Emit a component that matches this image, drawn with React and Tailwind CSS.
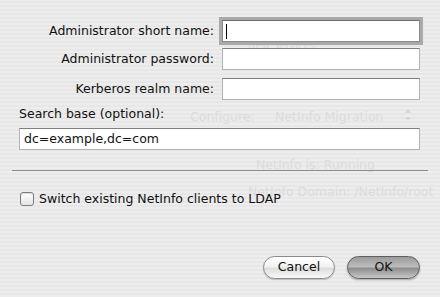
export default function App() {
  const font = { fontFamily: '"DejaVu Sans", "Liberation Sans", sans-serif' }

  return (
    <div
      style={font}
      className="relative w-[440px] h-[297px] overflow-hidden text-[12.5px] text-[#111] bg-[repeating-linear-gradient(0deg,#ededed_0px,#ededed_2px,#e7e7e7_2px,#e7e7e7_4px)]"
    >
      {/* ghost window behind the sheet */}
      <div className="absolute inset-0 pointer-events-none text-[#dcdcdc] text-[12.5px]">
        <span className="absolute left-[248px] top-[38px] text-[10px]">New Services</span>
        <span className="absolute left-[190px] top-[108px]">Configure:</span>
        <span className="absolute left-[275px] top-[108px]">NetInfo Migration</span>
        <svg className="absolute left-[404px] top-[107px]" width="8" height="16" viewBox="0 0 8 16">
          <path d="M1 6 L4 2 L7 6 Z M1 10 L4 14 L7 10 Z" fill="#d8d8d8" />
        </svg>
        <span className="absolute left-[256px] top-[156px]">NetInfo is:  Running</span>
        <span className="absolute left-[248px] top-[183px]">NetInfo Domain:  /NetInfo/root</span>
      </div>

      <div className="relative flex flex-col pt-[20px] px-[19px]">
        {/* Admin fields */}
        <div className="flex items-center">
          <label className="w-[195px] text-right">Administrator short name:</label>
          <div className="ml-[8px] w-[198px] h-[22px] bg-white border border-[#8a8a8a] border-t-[#6e6e6e] ring-[3px] ring-[#a9a9a9] flex items-center pl-[3px]">
            <span className="w-px h-[15px] bg-black" />
          </div>
        </div>
        <div className="flex items-center mt-[6px]">
          <label className="w-[195px] text-right">Administrator password:</label>
          <div className="ml-[8px] w-[198px] h-[22px] bg-white border border-[#b3b3b3] border-t-[#7f7f7f]" />
        </div>
        <div className="flex items-center mt-[8px]">
          <label className="w-[195px] text-right">Kerberos realm name:</label>
          <div className="ml-[8px] w-[198px] h-[22px] bg-white border border-[#b3b3b3] border-t-[#7f7f7f]" />
        </div>

        {/* Search base */}
        <div className="mt-[6px] h-[16px] flex items-center">Search base (optional):</div>
        <div className="mt-[6px] w-[401px] h-[22px] bg-white border border-[#b3b3b3] border-t-[#7f7f7f] flex items-center pl-[4px]">
          dc=example,dc=com
        </div>

        {/* Separator */}
        <div className="-mx-[7px] mt-[20px] h-px bg-[#8c8c8c]" />

        {/* Checkbox */}
        <div className="mt-[21px] h-[14px] flex items-center gap-[5px] pl-px">
          <span className="w-[14px] h-[14px] rounded-[3px] border border-[#7d7d7d] bg-[linear-gradient(#ffffff,#e4e4e4)] shadow-[inset_0_1px_1px_rgba(0,0,0,0.15)]" />
          <span>Switch existing NetInfo clients to LDAP</span>
        </div>

        {/* Buttons */}
        <div className="mt-[50px] flex justify-end gap-[12px] pr-[1px]">
          <button className="w-[72px] h-[23px] rounded-full border border-[#8a8a8a] bg-[linear-gradient(#ffffff,#f2f2f2_45%,#dedede_55%,#f8f8f8)] shadow-[0_1px_1px_rgba(0,0,0,0.2)] text-[12.5px] text-[#111]">
            Cancel
          </button>
          <button className="w-[73px] h-[23px] rounded-full border border-[#5e5e5e] bg-[linear-gradient(#9a9a9a,#bcbcbc_45%,#8e8e8e_55%,#c8c8c8)] shadow-[0_1px_2px_rgba(0,0,0,0.3)] text-[12.5px] text-[#111]">
            OK
          </button>
        </div>
      </div>
    </div>
  )
}
